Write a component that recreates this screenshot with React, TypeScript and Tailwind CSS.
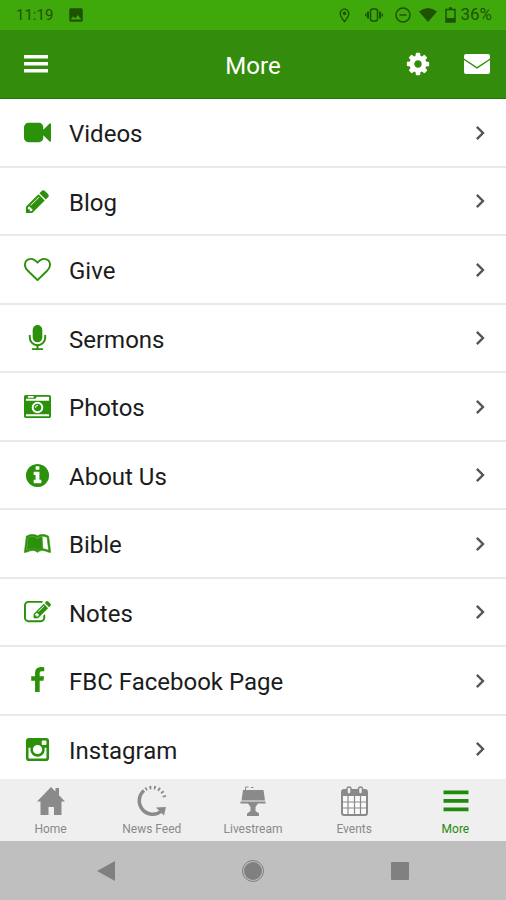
import React from 'react';
import { FaLeanpub } from 'react-icons/fa';
import { MdImage, MdOutlineLocationOn, MdChevronRight } from 'react-icons/md';

const icons = {
  video:
    'M1792 352v1088q0 42-39 59-13 5-25 5-27 0-45-19l-403-403v166q0 119-84.500 203.500t-203.500 84.500h-704q-119 0-203.500-84.500t-84.500-203.500v-704q0-119 84.500-203.500t203.500-84.500h704q119 0 203.500 84.500t84.500 203.500v165l403-402q18-19 45-19 12 0 25 5 39 17 39 59z',
  pencil:
    'M491 1536l91-91-235-235-91 91v107h128v128h107zm523-928q0-22-22-22-10 0-17 7l-542 542q-7 7-7 17 0 22 22 22 10 0 17-7l542-542q7-7 7-17zm-54-192l416 416-832 832h-416v-416zm683 96q0 53-37 90l-166 166-416-416 166-165q36-38 90-38 53 0 91 38l235 234q37 39 37 91z',
  heart:
    'M1664 596q0-81-21.500-143t-55-98.500-81.500-59.500-94-31-98-8-112 25.500-110.500 64-86.500 72-60 61.500q-18 22-49 22t-49-22q-24-28-60-61.500t-86.500-72-110.500-64-112-25.500-98 8-94 31-81.500 59.500-55 98.500-21.500 143q0 168 187 355l581 560 580-559q188-188 188-356zm128 0q0 221-229 450l-623 600q-18 18-44 18t-44-18l-624-602q-10-8-27.500-26t-55.500-65.500-68-97.500-53.500-121-23.500-138q0-220 127-344t351-124q62 0 126.500 21.500t120 58 95.500 68.500 76 68q36-36 76-68t95.500-68.500 120-58 126.500-21.500q224 0 351 124t127 344z',
  microphone:
    'M1472 704v128q0 221-147.500 384.500t-364.500 187.500v132h256q26 0 45 19t19 45-19 45-45 19h-640q-26 0-45-19t-19-45 19-45 45-19h256v-132q-217-24-364.500-187.500t-147.500-384.500v-128q0-26 19-45t45-19 45 19 19 45v128q0 185 131.500 316.500t316.500 131.500 316.500-131.500 131.500-316.500v-128q0-26 19-45t45-19 45 19 19 45zm-256-384v512q0 132-94 226t-226 94-226-94-94-226v-512q0-132 94-226t226-94 226 94 94 226z',
  camera:
    'M928 832q0-14-9-23t-23-9q-66 0-113 47t-47 113q0 14 9 23t23 9 23-9 9-23q0-40 28-68t68-28q14 0 23-9t9-23zm224 130q0 106-75 181t-181 75-181-75-75-181 75-181 181-75 181 75 75 181zm-1024 574h1536v-128h-1536v128zm1152-574q0-159-112.500-271.500t-271.500-112.500-271.500 112.500-112.500 271.500 112.500 271.500 271.500 112.500 271.500-112.500 112.500-271.500zm-1024-642h384v-128h-384v128zm-128 192h1536v-256h-828l-64 128h-644v128zm1664-256v1280q0 53-37.500 90.500t-90.500 37.500h-1536q-53 0-90.500-37.500t-37.500-90.500v-1280q0-53 37.500-90.500t90.500-37.500h1536q53 0 90.500 37.500t37.500 90.500z',
  info:
    'M1152 1376v-160q0-14-9-23t-23-9h-96v-512q0-14-9-23t-23-9h-320q-14 0-23 9t-9 23v160q0 14 9 23t23 9h96v320h-96q-14 0-23 9t-9 23v160q0 14 9 23t23 9h448q14 0 23-9t9-23zm-128-896v-160q0-14-9-23t-23-9h-192q-14 0-23 9t-9 23v160q0 14 9 23t23 9h192q14 0 23-9t9-23zm640 416q0 209-103 385.500t-279.500 279.500-385.500 103-385.500-103-279.500-279.500-103-385.500 103-385.500 279.500-279.500 385.500-103 385.500 103 279.500 279.500 103 385.500z',
  edit:
    'M888 1184l116-116-152-152-116 116v56h96v96h56zm440-720q-16-16-33 1l-350 350q-17 17-1 33t33-1l350-350q17-17 1-33zm80 594v190q0 119-84.500 203.500t-203.500 84.500h-832q-119 0-203.500-84.500t-84.500-203.500v-832q0-119 84.500-203.500t203.500-84.500h832q63 0 117 25 15 7 18 23 3 17-9 29l-49 49q-14 14-32 8-23-6-45-6h-832q-66 0-113 47t-47 113v832q0 66 47 113t113 47h832q66 0 113-47t47-113v-126q0-13 9-22l64-64q15-15 35-7t20 29zm-96-738l288 288-672 672h-288v-288zm444 132l-92 92-288-288 92-92q28-28 68-28t68 28l152 152q28 28 28 68t-28 68z',
  facebook:
    'M1343 12v264h-157q-86 0-116 36t-30 108v189h293l-39 296h-254v759h-306v-759h-255v-296h255v-218q0-186 104-288.500t277-102.500q147 0 228 12z',
  instagram:
    'M1490 1426v-648h-135q20 63 20 131 0 126-64 232.500t-174 168.500-240 62q-197 0-337-135.500t-140-327.500q0-68 20-131h-141v648q0 26 17.500 43.500t43.500 17.500h1069q25 0 43-17.500t18-43.500zm-284-533q0-124-90.500-211.500t-218.500-87.500q-127 0-217.500 87.500t-90.500 211.500 90.500 211.500 217.500 87.500q128 0 218.500-87.500t90.500-211.500zm284-360v-165q0-28-20-48.500t-49-20.500h-174q-29 0-49 20.500t-20 48.500v165q0 29 20 49t49 20h174q29 0 49-20t20-49zm174-208v1142q0 81-58 139t-139 58h-1142q-81 0-139-58t-58-139v-1142q0-81 58-139t139-58h1142q81 0 139 58t58 139z',
  gear:
    'M1152 896q0-106-75-181t-181-75-181 75-75 181 75 181 181 75 181-75 75-181zm512-109v222q0 12-8 23t-20 13l-185 28q-19 54-39 91 35 50 107 138 10 12 10 25t-9 23q-27 37-99 108t-94 71q-12 0-26-9l-138-108q-44 23-91 38-16 136-29 186-7 28-36 28h-222q-14 0-24.500-8.500t-11.500-21.500l-28-184q-49-16-90-37l-141 107q-10 9-25 9-14 0-25-11-126-114-165-168-7-10-7-23 0-12 8-23 15-21 51-66.500t54-70.500q-27-50-41-99l-183-27q-13-2-21-12.500t-8-23.500v-222q0-12 8-23t19-13l186-28q14-46 39-92-40-57-107-138-10-12-10-24 0-10 9-23 26-36 98.500-107.500t94.500-71.500q13 0 26 10l138 107q44-23 91-38 16-136 29-186 7-28 36-28h222q14 0 24.500 8.500t11.500 21.500l28 184q49 16 90 37l142-107q9-9 24-9 13 0 25 10 129 119 165 170 7 8 7 22 0 12-8 23-15 21-51 66.500t-54 70.500q26 50 41 98l183 28q13 2 21 12.500t8 23.500z',
};

const Icon = ({ d, className = 'size-[27px]' }: { d: string; className?: string }) => (
  <svg className={className} viewBox="0 0 1792 1792" fill="currentColor" aria-hidden="true">
    <path d={d} />
  </svg>
);

const menuItems = [
  { label: 'Videos', icon: <Icon d={icons.video} /> },
  { label: 'Blog', icon: <Icon d={icons.pencil} /> },
  { label: 'Give', icon: <Icon d={icons.heart} /> },
  { label: 'Sermons', icon: <Icon d={icons.microphone} /> },
  { label: 'Photos', icon: <Icon d={icons.camera} /> },
  { label: 'About Us', icon: <Icon d={icons.info} /> },
  { label: 'Bible', icon: <FaLeanpub className="size-[27px] stroke-current" strokeWidth={12} /> },
  { label: 'Notes', icon: <Icon d={icons.edit} /> },
  { label: 'FBC Facebook Page', icon: <Icon d={icons.facebook} /> },
  { label: 'Instagram', icon: <Icon d={icons.instagram} /> },
];

const HomeIcon = () => (
  <svg className="size-8" viewBox="0 0 32 32" fill="currentColor" aria-hidden="true">
    <path d="M2 16.500 16 2l4.500 4.600V3h3.500v7.200l6 6.300h-3.500V30h-7.500v-8h-5.500v8h-8V16.500z" />
  </svg>
);

const NewsFeedIcon = () => (
  <svg className="size-8" viewBox="0 0 32 32" fill="none" stroke="currentColor" aria-hidden="true">
    <path d="M8 5.500A12.500 12.500 0 1 0 25.500 26" strokeWidth="3.500" />
    <path d="M9.500 4.400A12.500 12.500 0 0 1 28.800 14" strokeWidth="3.500" strokeDasharray="1.800 2.600" />
    <path d="M20 22.500l10-.5-2 8.500z" fill="currentColor" stroke="none" />
  </svg>
);

const PodiumIcon = () => (
  <svg className="size-8" viewBox="0 0 32 32" fill="currentColor" aria-hidden="true">
    <path d="M6 5h20.500L28 15.500H4.500zM3.500 16.500h25v2h-25zM11 18.500h10L18.500 22v4h-5v-4zM13.500 26h5l3.500 2.500V31H10v-2.500z" />
    <path d="M8.500 5V2h3M14 2.500h2.500" fill="none" stroke="currentColor" />
  </svg>
);

const CalendarIcon = () => (
  <svg className="size-8" viewBox="0 0 32 32" fill="none" stroke="currentColor" aria-hidden="true">
    <rect x="4" y="5" width="25" height="25" rx="2" fill="#fafafa" strokeWidth="2" />
    <path d="M4 5h25v6H4z" fill="currentColor" stroke="none" />
    <path d="M4 17h25M4 23h25M10 11v19M16.500 11v19M22.500 11v19" strokeWidth="1.200" />
    <rect x="9" y="2" width="4" height="7" rx="2" fill="#efefef" strokeWidth="1.500" />
    <rect x="20.500" y="2" width="4" height="7" rx="2" fill="#efefef" strokeWidth="1.500" />
  </svg>
);

const BarsIcon = () => (
  <svg className="size-8" viewBox="0 0 32 32" fill="currentColor" aria-hidden="true">
    <path d="M4.500 5.500h25v3.800h-25zM4.500 14h25v3.800h-25zM4.500 22.500h25v3.800h-25z" />
  </svg>
);

const tabs = [
  { label: 'Home', icon: <HomeIcon /> },
  { label: 'News Feed', icon: <NewsFeedIcon /> },
  { label: 'Livestream', icon: <PodiumIcon /> },
  { label: 'Events', icon: <CalendarIcon /> },
  { label: 'More', icon: <BarsIcon />, active: true },
];

const StatusBar = () => (
  <div className="flex h-[30px] shrink-0 items-center justify-between bg-[#3fa90c] pr-[14px] pl-4 text-[#1d5403]">
    <div className="flex items-center gap-[14px]">
      <span className="text-[15px]">11:19</span>
      <MdImage className="size-[18px]" />
    </div>
    <div className="flex items-center">
      <MdOutlineLocationOn className="mr-3 size-[17px]" />
      <svg className="mr-3 h-4 w-[18px]" viewBox="0 0 18 16" fill="none" stroke="currentColor" aria-hidden="true">
        <rect x="5.500" y="2" width="7" height="12" rx="2" strokeWidth="1.500" />
        <path d="M3 4.500v7M15 4.500v7" strokeWidth="2" />
        <path d="M.8 6.500v3M17.200 6.500v3" strokeWidth="1.500" />
      </svg>
      <svg className="mr-2 size-4" viewBox="0 0 16 16" fill="none" stroke="currentColor" strokeWidth="1.500" aria-hidden="true">
        <circle cx="8" cy="8" r="7" />
        <path d="M4.500 8h7" />
      </svg>
      <svg className="mr-2 h-4 w-[18px]" viewBox="0 0 18 16" fill="currentColor" aria-hidden="true">
        <path d="M9 15 0 4.500Q9-2.500 18 4.500z" />
      </svg>
      <svg className="mr-1 h-4 w-[11px]" viewBox="0 0 11 16" aria-hidden="true">
        <path d="M1 2.500h9v12.500H1zM4 1h3" fill="none" stroke="currentColor" strokeWidth="1.500" />
        <path d="M1 11h9v4H1z" fill="currentColor" />
      </svg>
      <span className="text-[17px]">36%</span>
    </div>
  </div>
);

const Header = () => (
  <header className="grid h-[69px] shrink-0 grid-cols-3 items-center border-b border-[#1c7a08] bg-[#338c0b] px-4 text-white">
    <button aria-label="Menu" className="justify-self-start px-2">
      <svg className="h-[18px] w-6" viewBox="0 0 24 18" fill="currentColor" aria-hidden="true">
        <path d="M0 0h24v3.500H0zM0 7h24v3.500H0zM0 14h24v3.500H0z" />
      </svg>
    </button>
    <h1 className="pt-1 text-center text-2xl">More</h1>
    <div className="flex items-center gap-[33px] justify-self-end">
      <button aria-label="Settings">
        <Icon d={icons.gear} className="size-[26px]" />
      </button>
      <button aria-label="Messages">
        <svg className="h-5 w-[26px]" viewBox="0 0 26 20" fill="currentColor" aria-hidden="true">
          <path d="M2 0h22q2 0 2 2v2.500L13 13 0 4.500V2Q0 0 2 0zM0 6l13 8.800L26 6v12q0 2-2 2H2q-2 0-2-2z" />
        </svg>
      </button>
    </div>
  </header>
);

const App = () => {
  return (
    <div className="flex h-screen flex-col bg-white font-['Roboto',sans-serif]">
      <StatusBar />
      <Header />

      <main className="min-h-0 flex-1 overflow-y-auto [scrollbar-width:none]">
        <ul>
          {menuItems.map((item) => (
            <li key={item.label} className="border-b-2 border-[#e9e9e9] odd:h-[69px] even:h-[68px]">
              <a href="#" className="flex h-full items-center pr-3 pl-6 text-2xl text-[#1c1c1c]">
                <span className="mr-[18px] text-[#2b900a]">{item.icon}</span>
                <span className="flex-1 pt-[3px]">{item.label}</span>
                <MdChevronRight className="size-7 text-[#555]" />
              </a>
            </li>
          ))}
        </ul>
      </main>

      <nav className="grid h-[62px] shrink-0 grid-cols-5 bg-[#efefef]">
        {tabs.map((tab) => (
          <a
            key={tab.label}
            href="#"
            className={`flex flex-col items-center gap-1 pt-[6px] text-xs ${tab.active ? 'text-[#1f8a0b]' : 'text-[#8a8a8a]'}`}
          >
            {tab.icon}
            <span>{tab.label}</span>
          </a>
        ))}
      </nav>

      <div className="grid h-[59px] shrink-0 grid-cols-3 place-items-center bg-[#bfbfbf] px-8 text-[#808080]">
        <button aria-label="Back">
          <svg className="size-5" viewBox="0 0 20 20" fill="currentColor" aria-hidden="true">
            <path d="M19 0v20L1 10z" />
          </svg>
        </button>
        <button aria-label="Home screen">
          <svg className="size-6" viewBox="0 0 24 24" fill="currentColor" aria-hidden="true">
            <circle cx="12" cy="12" r="9" />
            <circle cx="12" cy="12" r="10.500" fill="none" stroke="currentColor" />
          </svg>
        </button>
        <button aria-label="Recent apps">
          <svg className="size-5" viewBox="0 0 20 20" fill="currentColor" aria-hidden="true">
            <rect x="1" y="1" width="18" height="18" rx="1" />
          </svg>
        </button>
      </div>
    </div>
  );
};

export default App;
